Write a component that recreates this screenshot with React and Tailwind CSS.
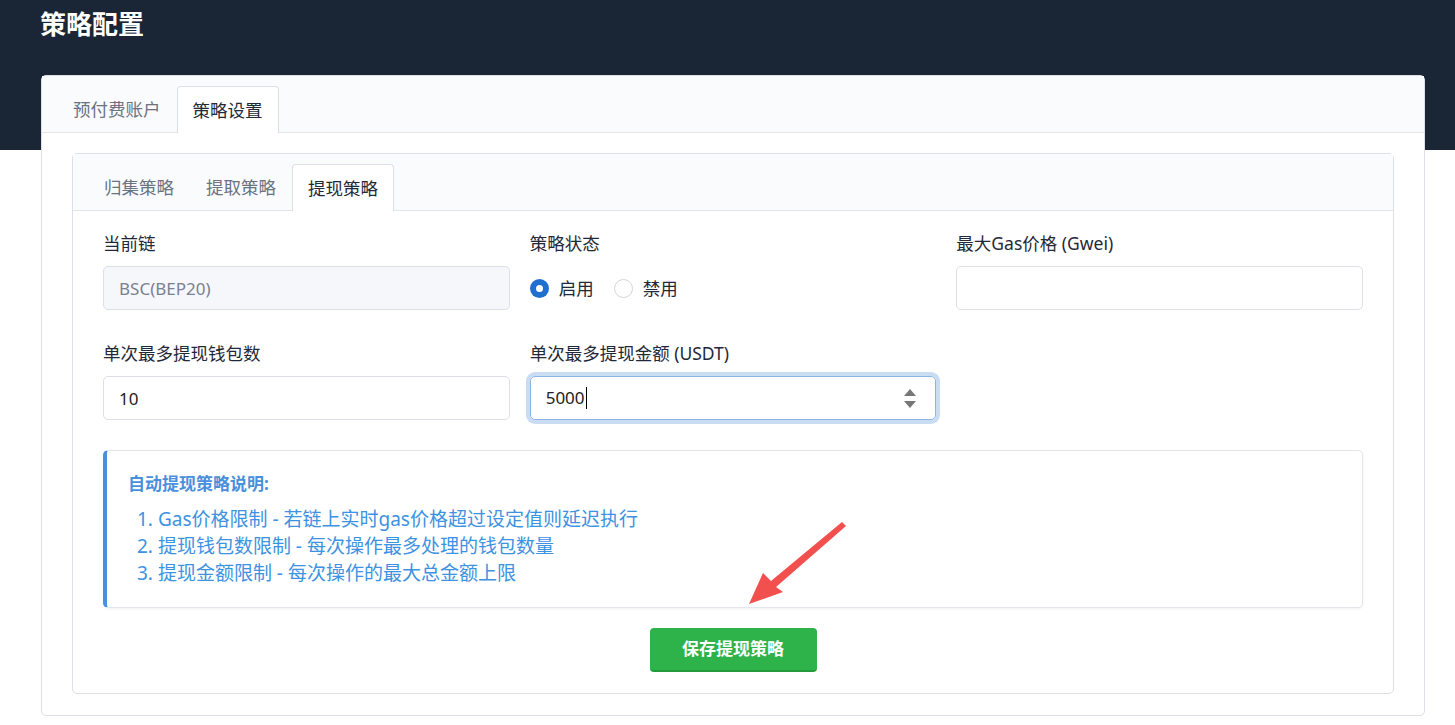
import React, { useState } from 'react';

const font = "font-['Noto_Sans','Noto_Sans_CJK_SC',sans-serif]";

const Tabs = ({ items, active, onChange }) => (
  <div className="flex h-[57px] items-end border-b border-[#e2e5ea] bg-[#fafbfd] pl-[15px]">
    {items.map((item) => (
      <button
        key={item}
        type="button"
        onClick={() => onChange(item)}
        className={
          item === active
            ? 'relative -mb-px h-[47px] rounded-t-[4px] border border-b-0 border-[#dcdfe6] bg-white px-[15px] text-[17.5px] text-[#1f2937]'
            : 'h-[46px] px-[16px] text-[17.5px] text-[#6b7280]'
        }
      >
        {item}
      </button>
    ))}
  </div>
);

const Field = ({ label, children }) => (
  <div className="flex flex-col">
    <label className="h-[25px] text-[17.5px] leading-[25px] text-[#1f2937]">{label}</label>
    <div className="mt-[10px]">{children}</div>
  </div>
);

const inputBase =
  'h-[44px] w-full rounded-[5px] border border-[#dcdfe6] px-[15px] text-[17px] outline-none';

const Radio = ({ checked, label, onClick }) => (
  <label className="flex cursor-pointer items-center gap-[10px]" onClick={onClick}>
    <span
      className={
        checked
          ? 'flex h-[19px] w-[19px] items-center justify-center rounded-full bg-[#1f6fd0]'
          : 'h-[19px] w-[19px] rounded-full border border-[#d2d6dc] bg-white'
      }
    >
      {checked && <span className="h-[7px] w-[7px] rounded-full bg-white" />}
    </span>
    {label}
  </label>
);

export default function App() {
  const [outerTab, setOuterTab] = useState('策略设置');
  const [innerTab, setInnerTab] = useState('提现策略');
  const [status, setStatus] = useState('on');
  const [wallets, setWallets] = useState('10');
  const [gas, setGas] = useState('');

  return (
    <div className={`relative min-h-screen bg-white ${font}`}>
      {/* Header */}
      <div className="h-[150px] bg-[#1a2535] px-[40px] pt-[6px]">
        <h1 className="text-[26px] font-bold leading-[36px] text-white">策略配置</h1>
      </div>

      {/* Outer card */}
      <div className="relative -mt-[75px] ml-[41px] mr-[30px] rounded-[5px] border border-[#dcdfe6] bg-white pb-[21px]">
        <Tabs items={['预付费账户', '策略设置']} active={outerTab} onChange={setOuterTab} />

        {/* Inner card */}
        <div className="mx-[30px] mt-[20px] rounded-[5px] border border-[#dcdfe6] bg-white">
          <Tabs items={['归集策略', '提取策略', '提现策略']} active={innerTab} onChange={setInnerTab} />

          <div className="px-[30px] pb-[21px] pt-[20px]">
            <div className="grid grid-cols-3 gap-x-[20px] gap-y-[31px]">
              <Field label="当前链">
                <input disabled value="BSC(BEP20)" className={`${inputBase} bg-[#f5f7fa] text-[#7b8190]`} />
              </Field>

              <Field label="策略状态">
                <div className="flex h-[44px] items-center gap-[20px] text-[17.5px] text-[#1f2937]">
                  <Radio checked={status === 'on'} label="启用" onClick={() => setStatus('on')} />
                  <Radio checked={status === 'off'} label="禁用" onClick={() => setStatus('off')} />
                </div>
              </Field>

              <Field label="最大Gas价格 (Gwei)">
                <input value={gas} onChange={(e) => setGas(e.target.value)} className={`${inputBase} text-[#222]`} />
              </Field>

              <Field label="单次最多提现钱包数">
                <input value={wallets} onChange={(e) => setWallets(e.target.value)} className={`${inputBase} text-[#222]`} />
              </Field>

              <Field label="单次最多提现金额 (USDT)">
                {/* focused number field */}
                <div className="flex h-[44px] w-full items-center rounded-[5px] border border-[#8db4e6] px-[15px] text-[17px] text-[#222] shadow-[0_0_0_4px_#c9dcf2]">
                  <span>5000</span>
                  <span className="ml-px h-[22px] w-px bg-black" />
                  <span className="ml-auto mr-[4px] flex flex-col items-center gap-[5px]">
                    <svg width="12" height="7" viewBox="0 0 12 7">
                      <path d="M6 0 L12 7 L0 7 Z" fill="#777" />
                    </svg>
                    <svg width="12" height="7" viewBox="0 0 12 7">
                      <path d="M0 0 L12 0 L6 7 Z" fill="#777" />
                    </svg>
                  </span>
                </div>
              </Field>
            </div>

            {/* Description */}
            <div className="mt-[30px] rounded-[5px] border border-l-4 border-[#e3e6ea] border-l-[#4a90e2] bg-white pb-[20px] pl-[21px] pt-[21px] shadow-[0_1px_3px_rgba(0,0,0,0.06)]">
              <div className="text-[17px] font-bold leading-[24px] text-[#4a8fdc]">自动提现策略说明:</div>
              <ol className="mt-[10px] pl-[9px] text-[19px] leading-[27px] text-[#3d92e2]">
                <li>1. Gas价格限制 - 若链上实时gas价格超过设定值则延迟执行</li>
                <li>2. 提现钱包数限制 - 每次操作最多处理的钱包数量</li>
                <li>3. 提现金额限制 - 每次操作的最大总金额上限</li>
              </ol>
            </div>

            <div className="mt-[20px] flex justify-center">
              <button
                type="button"
                className="h-[44px] w-[167px] rounded-[4px] border-b-2 border-[#249a3d] bg-[#2eb34a] text-[17px] font-bold text-white"
              >
                保存提现策略
              </button>
            </div>
          </div>
        </div>
      </div>

      {/* annotation arrow */}
      <svg className="pointer-events-none absolute left-0 top-0" width="1455" height="725">
        <polygon points="749,604 763,573 771,581 842,522 846,526 776,587 783,592" fill="#f2504f" />
      </svg>
    </div>
  );
}
